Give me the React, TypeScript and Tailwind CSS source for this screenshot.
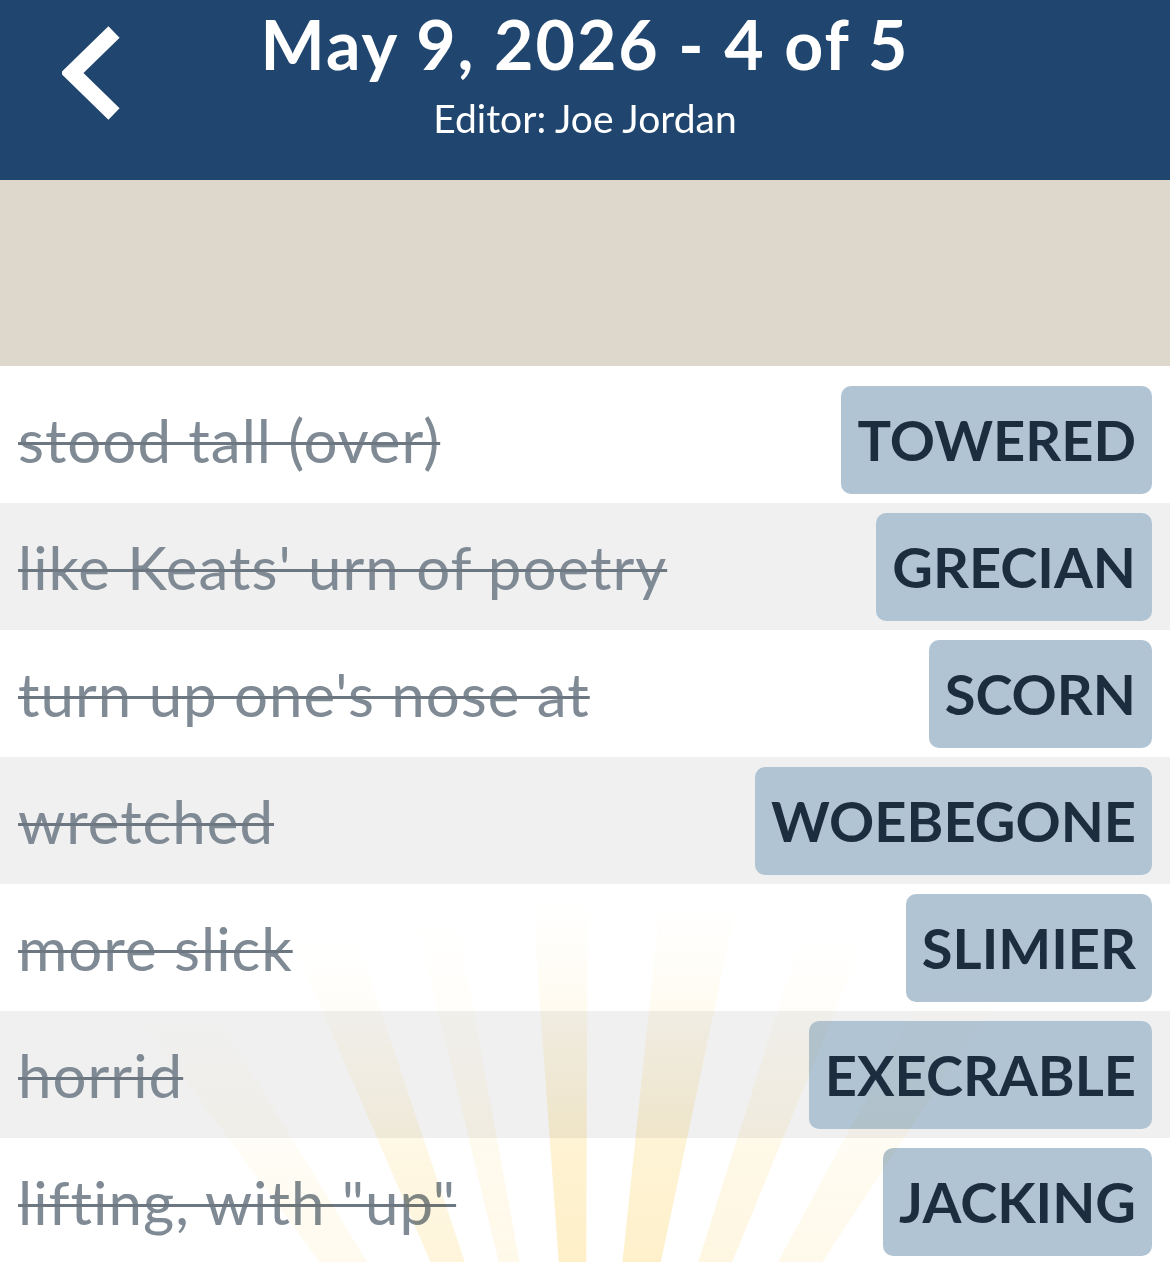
import React from "react";

type Clue = { clue: string; answer: string };

const clues: Clue[] = [
  { clue: "stood tall (over)", answer: "TOWERED" },
  { clue: "like Keats' urn of poetry", answer: "GRECIAN" },
  { clue: "turn up one's nose at", answer: "SCORN" },
  { clue: "wretched", answer: "WOEBEGONE" },
  { clue: "more slick", answer: "SLIMIER" },
  { clue: "horrid", answer: "EXECRABLE" },
  { clue: 'lifting, with "up"', answer: "JACKING" },
];

// Rays of the sunburst: [angle from vertical in degrees, half-width in degrees, opacity]
const rays: [number, number, number][] = [
  [-34, 2.6, 0.3],
  [-21, 2.4, 0.6],
  [-12, 1.6, 0.35],
  [-2, 2.2, 0.9],
  [9, 3.0, 0.85],
  [20, 2.4, 0.5],
  [31, 2.6, 0.35],
];

function Sunburst() {
  const cx = 585;
  const cy = 1250;
  const len = 1200;
  const rad = (d: number) => (d * Math.PI) / 180;
  return (
    <svg
      className="pointer-events-none absolute inset-0 h-full w-full mix-blend-multiply"
      viewBox="0 0 1170 896"
      preserveAspectRatio="none"
    >
      <defs>
        <linearGradient id="rayFade" x1="0" y1="1" x2="0" y2="0">
          <stop offset="0" stopColor="#fde196" stopOpacity="1" />
          <stop offset="0.4" stopColor="#fde8ad" stopOpacity="0.6" />
          <stop offset="0.6" stopColor="#fff3d0" stopOpacity="0" />
        </linearGradient>
      </defs>
      {rays.map(([a, w, o], i) => {
        const a1 = rad(a - w);
        const a2 = rad(a + w);
        const p1 = [cx + Math.sin(a1) * len, cy - Math.cos(a1) * len];
        const p2 = [cx + Math.sin(a2) * len, cy - Math.cos(a2) * len];
        return (
          <polygon
            key={i}
            points={`${cx},${cy} ${p1[0]},${p1[1]} ${p2[0]},${p2[1]}`}
            fill="url(#rayFade)"
            opacity={o}
          />
        );
      })}
    </svg>
  );
}

function BackChevron() {
  return (
    <svg width="70" height="100" viewBox="0 0 70 100" className="block">
      <polyline
        points="52,12 10,53 52,94"
        fill="none"
        stroke="white"
        strokeWidth="16"
        strokeLinecap="butt"
        strokeLinejoin="miter"
      />
    </svg>
  );
}

export default function App() {
  return (
    <div
      className="h-[1262px] w-[1170px] overflow-hidden bg-white"
      style={{ fontFamily: "Lato, 'Noto Sans', sans-serif" }}
    >
      <header className="relative flex h-[180px] flex-col items-center bg-[#20466f] pt-[4px] text-white">
        <button className="absolute left-[62px] top-[20px]" aria-label="Back">
          <BackChevron />
        </button>
        <h1 className="text-[68px] font-bold leading-[80px] tracking-[2px]">May 9, 2026 - 4 of 5</h1>
        <p className="mt-[12px] text-[39px] leading-[44px]">Editor: Joe Jordan</p>
      </header>

      <div className="h-[186px] bg-[#ddd8cb]" />

      <div className="relative pt-[10px]">
        {clues.map((c, i) => (
          <div
            key={c.answer}
            className={`flex h-[127px] items-center justify-between pl-[18px] pr-[18px] ${
              i % 2 === 1 ? "bg-[#f0f0f0]" : "bg-white"
            }`}
          >
            <span className="text-[60px] leading-none tracking-[1px] text-[#7f8a94] line-through decoration-[#6d7781] decoration-[3px]">
              {c.clue}
            </span>
            <span className="flex h-[108px] items-center rounded-[10px] bg-[#b1c4d3] px-[16px] text-[56px] font-bold leading-none text-[#1c2d40]">
              {c.answer}
            </span>
          </div>
        ))}
        <Sunburst />
      </div>
    </div>
  );
}
